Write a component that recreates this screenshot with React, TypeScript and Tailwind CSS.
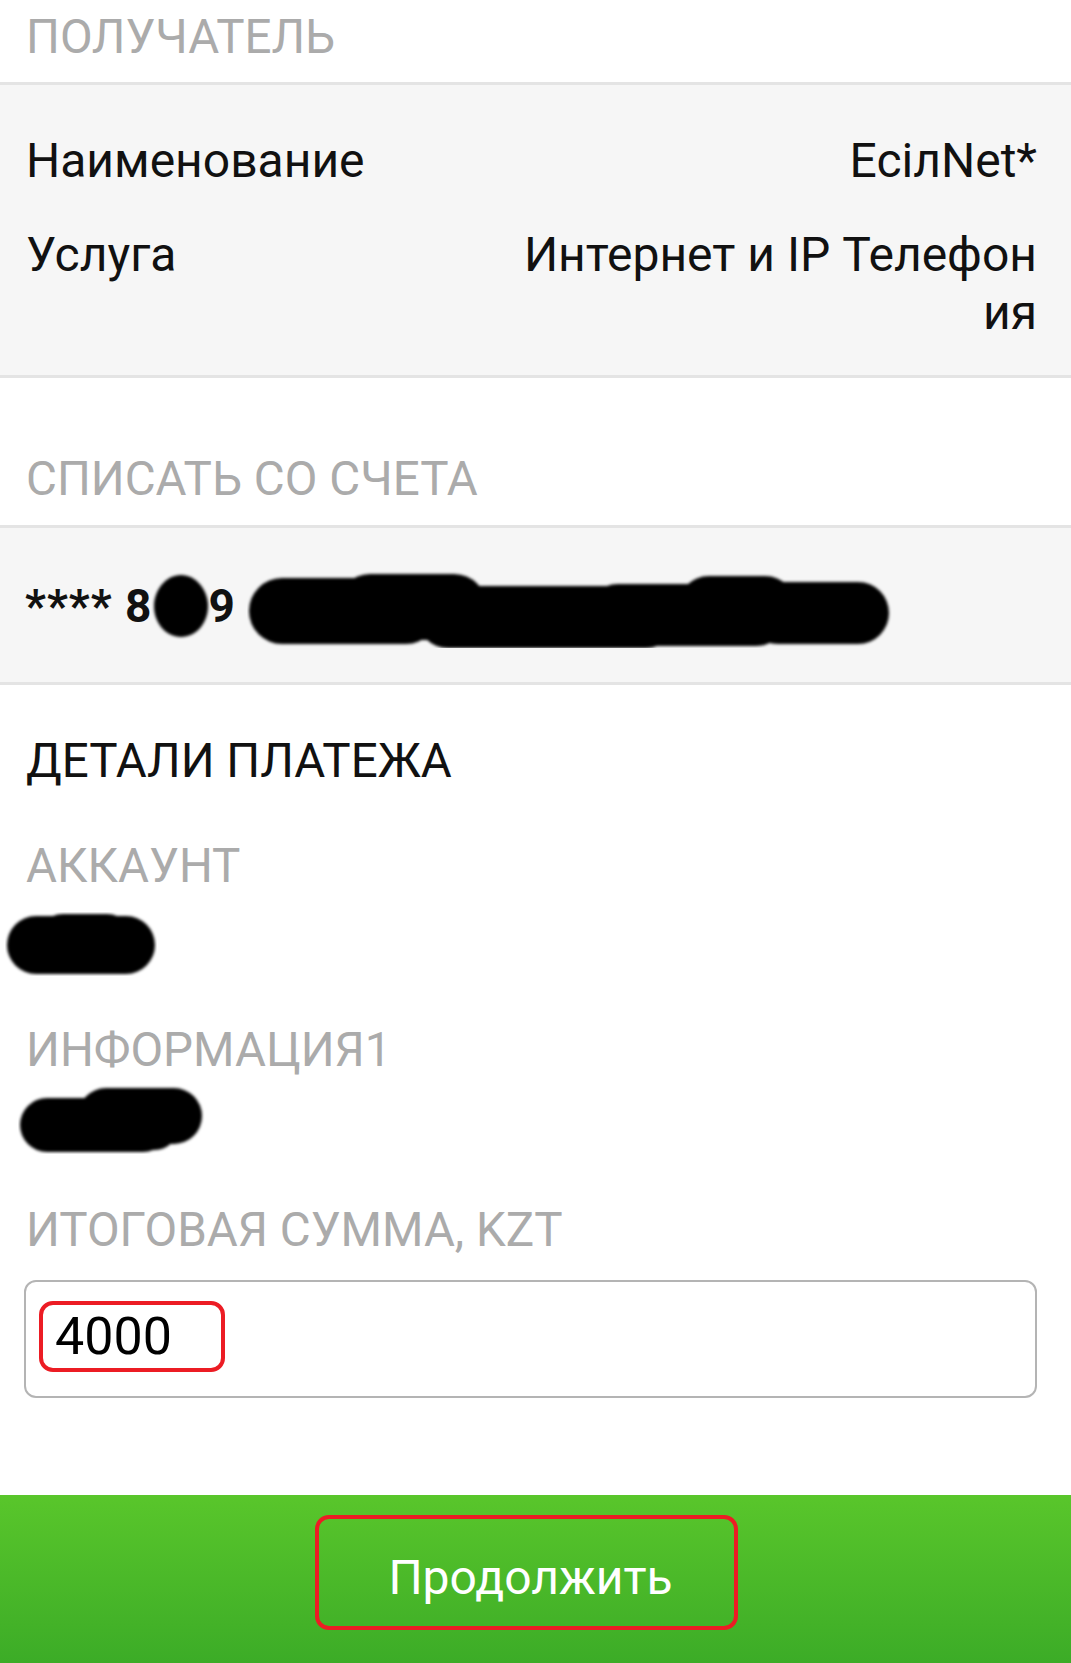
import React from "react";

const font = { fontFamily: "Roboto, 'Noto Sans', sans-serif" };

// scribbled-out redaction marks, drawn as blurred black shapes
function Blot({ w, h, shapes }: { w: number; h: number; shapes: string[] }) {
  const id = `b${w}x${h}`;
  return (
    <svg width={w} height={h} viewBox={`0 0 ${w} ${h}`} className="block">
      <defs>
        <filter id={id} x="-10%" y="-20%" width="120%" height="140%">
          <feGaussianBlur stdDeviation="1.6" />
        </filter>
      </defs>
      <g filter={`url(#${id})`} fill="#000">
        {shapes.map((d, i) => (
          <path key={i} d={d} />
        ))}
      </g>
    </svg>
  );
}

function Pill(x: number, y: number, w: number, h: number) {
  const r = h / 2;
  return `M${x + r} ${y}h${w - 2 * r}a${r} ${r} 0 0 1 0 ${h}h${-(w - 2 * r)}a${r} ${r} 0 0 1 0 ${-h}z`;
}

function Label({ children, dark }: { children: React.ReactNode; dark?: boolean }) {
  return (
    <div className={`text-[47.5px] leading-[58px] ${dark ? "text-[#111]" : "text-[#ababab]"}`}>
      {children}
    </div>
  );
}

export default function App() {
  return (
    <div className="w-[1071px] h-[1663px] bg-white flex flex-col overflow-hidden" style={font}>
      {/* recipient */}
      <div className="h-[82px] flex items-center px-[26px] pb-[8px]">
        <Label>ПОЛУЧАТЕЛЬ</Label>
      </div>
      <div className="h-[3px] bg-[#e4e4e4]" />
      <div className="bg-[#f6f6f6] pl-[26px] pr-[34px] pt-[47px] pb-[33px] flex flex-col gap-[36px] text-[48px] leading-[58px] text-[#111]">
        <div className="flex justify-between">
          <span>Наименование</span>
          <span>ЕсілNet*</span>
        </div>
        <div className="flex justify-between">
          <span>Услуга</span>
          <span className="text-right">
            Интернет и IP Телефон
            <br />
            ия
          </span>
        </div>
      </div>
      <div className="h-[3px] bg-[#e4e4e4]" />

      {/* debit account */}
      <div className="h-[147px] flex items-end px-[26px] pb-[17px]">
        <Label>СПИСАТЬ СО СЧЕТА</Label>
      </div>
      <div className="h-[3px] bg-[#e4e4e4]" />
      <div className="h-[154px] bg-[#f6f6f6] flex items-center pl-[25px] pt-[2px] text-[46px] font-bold text-[#111]">
        <span className="tracking-[1px]">**** 8</span>
        <span className="-ml-[1px]">
          <Blot w={60} h={68} shapes={["M30 3C45 3 57 18 57 34C57 51 45 65 30 65C15 65 3 51 3 34C3 18 15 3 30 3z"]} />
        </span>
        <span className="-ml-[3px]">9</span>
        <span className="ml-[12px] mt-[6px]">
          <Blot
            w={646}
            h={78}
            shapes={[
              Pill(2, 8, 190, 66),
              Pill(90, 4, 150, 66),
              Pill(170, 16, 260, 62),
              Pill(340, 14, 200, 62),
              Pill(430, 6, 120, 64),
              Pill(500, 12, 142, 62),
            ]}
          />
        </span>
      </div>
      <div className="h-[3px] bg-[#e4e4e4]" />

      {/* payment details */}
      <div className="flex flex-col px-[26px]">
        <div className="mt-[47px]">
          <Label dark>ДЕТАЛИ ПЛАТЕЖА</Label>
        </div>
        <div className="mt-[47px]">
          <Label>АККАУНТ</Label>
        </div>
        <div className="mt-[17px] -ml-[21px]">
          <Blot w={152} h={64} shapes={[Pill(2, 4, 148, 58), Pill(30, 2, 100, 56)]} />
        </div>
        <div className="mt-[45px]">
          <Label>ИНФОРМАЦИЯ1</Label>
        </div>
        <div className="mt-[5px] -ml-[8px]">
          <Blot w={188} h={70} shapes={[Pill(2, 14, 150, 54), Pill(60, 4, 124, 56), Pill(20, 20, 140, 46)]} />
        </div>
        <div className="mt-[47px]">
          <Label>ИТОГОВАЯ СУММА, KZT</Label>
        </div>
        <div className="mt-[21px] -ml-[2px] mr-[8px] h-[118px] border-2 border-[#b4b4b4] rounded-[12px] flex items-center pl-[13px] pb-[6px]">
          <span className="w-[186px] h-[71px] border-4 border-[#ec1c24] rounded-[14px] flex items-center pl-[12px] pt-[2px] text-[52px] text-black">
            4000
          </span>
        </div>
      </div>

      {/* continue */}
      <div className="mt-auto h-[168px] bg-gradient-to-b from-[#59c62b] to-[#3cac27] flex items-center justify-center pr-[18px] pb-[13px]">
        <div className="w-[423px] h-[115px] border-4 border-[#ec1c24] rounded-[14px] flex items-center justify-center pt-[10px] pl-[8px] text-[48px] text-white">
          Продолжить
        </div>
      </div>
    </div>
  );
}
